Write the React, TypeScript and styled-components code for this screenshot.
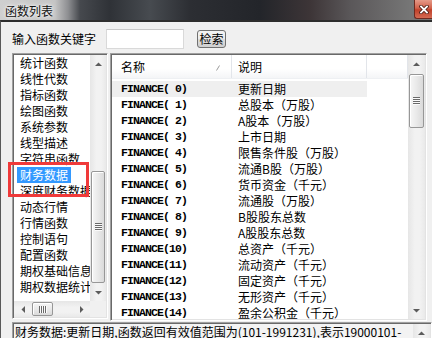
import styled, { createGlobalStyle } from 'styled-components';

const GlobalStyle = createGlobalStyle`
  html, body {
    margin: 0;
    padding: 0;
    background: #f0f0f0;
  }
  body {
    font-family: "Noto Sans CJK SC", "Noto Sans CJK JP", sans-serif;
    font-size: 12px;
  }
`;

const categories = [
  '统计函数',
  '线性代数',
  '指标函数',
  '绘图函数',
  '系统参数',
  '线型描述',
  '字符串函数',
  '财务数据',
  '深度财务数据',
  '动态行情',
  '行情函数',
  '控制语句',
  '配置函数',
  '期权基础信息',
  '期权数据统计',
];

const descriptions = [
  '更新日期',
  '总股本（万股）',
  'A股本（万股）',
  '上市日期',
  '限售条件股（万股）',
  '流通B股（万股）',
  '货币资金（千元）',
  '流通股（万股）',
  'B股股东总数',
  'A股股东总数',
  '总资产（千元）',
  '流动资产（千元）',
  '固定资产（千元）',
  '无形资产（千元）',
  '盈余公积金（千元）',
];

const Window = styled.div`
  width: 432px;
  height: 338px;
  overflow: hidden;
  display: flex;
  flex-direction: column;
  font-family: "Noto Sans CJK SC", "Noto Sans CJK JP", sans-serif;
  font-size: 12px;
  color: #000;
`;

const TitleBar = styled.div`
  height: 20px;
  flex: none;
  display: flex;
  align-items: flex-start;
  justify-content: space-between;
  background: linear-gradient(
    90deg,
    #cfcfcf 0,
    #c4c4c4 55px,
    #8e8f92 68px,
    #46494e 80px,
    #2f3237 110px,
    #474b50 150px,
    #2c2e33 190px,
    #23252a 260px,
    #3d3537 310px,
    #5a5759 350px,
    #767676 410px
  );
`;

const Title = styled.span`
  margin: 3px 0 0 5px;
  line-height: 16px;
  font-size: 12px;
  color: #111;
  text-shadow: 0 0 6px #fff, 0 0 3px #fff;
`;

const CloseButton = styled.div`
  width: 18px;
  height: 19px;
  box-sizing: border-box;
  border: 1px solid #6e2a20;
  border-right: none;
  border-top: none;
  border-radius: 0 0 0 3px;
  background: linear-gradient(180deg, #e59a88 0, #d2624b 45%, #c0412a 55%, #d46a52 100%);
  display: flex;
  align-items: center;
  justify-content: center;
`;

const Body = styled.div`
  flex: 1;
  min-height: 0;
  display: flex;
  flex-direction: column;
  background: #f0f0f0;
  border-top: 2px solid #2e2e2e;
  border-left: 1px solid #5a5a5a;
  padding: 6px 0 0 11px;
`;

const SearchRow = styled.div`
  height: 21px;
  flex: none;
  display: flex;
  align-items: center;
`;

const Label = styled.span`
  line-height: 21px;
  margin-right: 10px;
`;

const SearchInput = styled.div`
  width: 78px;
  height: 20px;
  box-sizing: border-box;
  background: #fff;
  border: 1px solid #d9d9d9;
  border-top-color: #c8c8c8;
`;

const SearchButton = styled.div`
  margin-left: 13px;
  width: 29px;
  height: 18px;
  box-sizing: border-box;
  border: 1px solid #707070;
  border-radius: 3px;
  background: linear-gradient(180deg, #f4f4f4 0, #ebebeb 50%, #dddddd 50%, #d0d0d0 100%);
  line-height: 16px;
  text-align: center;
`;

const Main = styled.div`
  margin-top: 4px;
  height: 268px;
  flex: none;
  display: flex;
  align-items: flex-start;
  gap: 2px;
`;

const Sunken = styled.div`
  box-sizing: border-box;
  border: 1px solid;
  border-color: #a0a0a0 #ffffff #ffffff #a0a0a0;
  box-shadow: inset 1px 1px 0 #696969, inset -1px -1px 0 #e3e3e3;
  padding: 1px;
`;

const CategoryPanel = styled(Sunken)`
  position: relative;
  width: 96px;
  height: 266px;
  display: flex;
  flex-direction: column;
`;

const CategoryTop = styled.div`
  flex: 1;
  min-height: 0;
  display: flex;
`;

const CategoryItems = styled.div`
  flex: 1;
  min-width: 0;
  background: #fff;
  overflow: hidden;
  padding-left: 3px;
`;

const CategoryRow = styled.div`
  height: 16px;
  line-height: 16px;
  white-space: nowrap;
`;

const CategoryLabel = styled.span<{ $selected?: boolean }>`
  display: inline-block;
  padding: 0 3px;
  background: ${({ $selected }) => ($selected ? '#3399ff' : 'transparent')};
  color: ${({ $selected }) => ($selected ? '#fff' : '#000')};
`;

const Marker = styled.div`
  position: absolute;
  left: -5px;
  top: 108px;
  width: 81px;
  height: 35px;
  box-sizing: border-box;
  border: 3px solid #f03a3a;
  pointer-events: none;
`;

const HBarRow = styled.div`
  height: 16px;
  flex: none;
  display: flex;
`;

const ScrollBar = styled.div<{ $horizontal?: boolean; $size?: number }>`
  flex: none;
  display: flex;
  flex-direction: ${({ $horizontal }) => ($horizontal ? 'row' : 'column')};
  ${({ $horizontal, $size = 17 }) => ($horizontal ? `height: ${$size}px; flex: 1;` : `width: ${$size}px;`)}
  background: ${({ $horizontal }) =>
    $horizontal
      ? 'linear-gradient(180deg, #e6e6e6, #f2f2f2 40%, #f2f2f2 70%, #e9e9e9)'
      : 'linear-gradient(90deg, #e6e6e6, #f2f2f2 40%, #f2f2f2 70%, #e9e9e9)'};
`;

const ArrowBox = styled.div<{ $horizontal?: boolean }>`
  flex: none;
  ${({ $horizontal }) => ($horizontal ? 'width: 17px;' : 'height: 17px;')}
  display: flex;
  align-items: center;
  justify-content: center;
`;

const Track = styled.div<{ $horizontal?: boolean; $end?: boolean }>`
  flex: 1;
  display: flex;
  flex-direction: ${({ $horizontal }) => ($horizontal ? 'row' : 'column')};
  justify-content: ${({ $end }) => ($end ? 'flex-end' : 'flex-start')};
  padding: 1px;
`;

const Thumb = styled.div<{ $horizontal?: boolean }>`
  flex: none;
  box-sizing: border-box;
  border: 1px solid #979797;
  border-radius: 2px;
  background: ${({ $horizontal }) =>
    $horizontal
      ? 'linear-gradient(180deg, #f6f6f6, #e9e9e9 50%, #dadada)'
      : 'linear-gradient(90deg, #f6f6f6, #e9e9e9 50%, #dadada)'};
  box-shadow: inset 1px 1px 0 #fff;
  display: flex;
  align-items: center;
  justify-content: center;
`;

const Grip = styled.div<{ $horizontal?: boolean }>`
  width: ${({ $horizontal }) => ($horizontal ? 8 : 7)}px;
  height: ${({ $horizontal }) => ($horizontal ? 7 : 8)}px;
  background: repeating-linear-gradient(
    ${({ $horizontal }) => ($horizontal ? '90deg' : '180deg')},
    #6a6a6a 0 1px,
    #fbfbfb 1px 2px
  );
`;

const Corner = styled.div`
  width: 16px;
  flex: none;
  background: #f0f0f0;
`;

const FuncPanel = styled(Sunken)`
  width: 317px;
  height: 268px;
  display: flex;
`;

const FuncList = styled.div`
  flex: 1;
  min-width: 0;
  background: #fff;
  overflow: hidden;
  display: flex;
  flex-direction: column;
`;

const Header = styled.div`
  height: 24px;
  flex: none;
  display: flex;
  background: linear-gradient(180deg, #ffffff 0, #ffffff 60%, #f4f5f7 100%);
  border-bottom: 1px solid #eef0f3;
  box-sizing: border-box;
`;

const HeaderCell = styled.div<{ $width?: number; $pad: number }>`
  ${({ $width }) => ($width ? `width: ${$width}px; flex: none;` : 'flex: 1;')}
  box-sizing: border-box;
  padding-left: ${({ $pad }) => $pad}px;
  line-height: 23px;
  border-right: 1px solid #e2e5ea;
  position: relative;
  display: flex;
  align-items: center;
`;

const SortMark = styled.svg`
  position: absolute;
  right: 11px;
  top: 10px;
`;

const Rows = styled.div`
  padding-top: 2px;
`;

const FuncRow = styled.div<{ $selected?: boolean }>`
  display: grid;
  grid-template-columns: 120px 135px;
  width: 255px;
  height: 16px;
  line-height: 16px;
  background: ${({ $selected }) => ($selected ? '#efefef' : 'transparent')};
`;

const FuncName = styled.span`
  padding-left: 9px;
  font-family: "Liberation Mono", "DejaVu Sans Mono", monospace;
  font-weight: bold;
  font-size: 11.5px;
  letter-spacing: -0.9px;
  white-space: pre;
`;

const FuncDesc = styled.span`
  padding-left: 6px;
  white-space: nowrap;
  overflow: hidden;
`;

const StatusBox = styled(Sunken)`
  margin-top: 1px;
  flex: 1;
  display: flex;
  background: #f3f3f3;
`;

const StatusText = styled.div`
  flex: 1;
  min-width: 0;
  padding-left: 1px;
  line-height: 16px;
  white-space: nowrap;
  overflow: hidden;
`;

type Dir = 'up' | 'down' | 'left' | 'right';

const arrowPoints: Record<Dir, string> = {
  up: '0,4 3.5,0.5 7,4',
  down: '0,0 3.5,3.5 7,0',
  left: '4,0 0.5,3.5 4,7',
  right: '0,0 3.5,3.5 0,7',
};

const Arrow = ({ dir }: { dir: Dir }) => {
  const vertical = dir === 'up' || dir === 'down';
  return (
    <svg width={vertical ? 7 : 4} height={vertical ? 4 : 7} viewBox={vertical ? '0 0 7 4' : '0 0 4 7'}>
      <polygon points={arrowPoints[dir]} fill="#5c5c5c" />
    </svg>
  );
};

const CloseGlyph = () => (
  <svg width="10" height="9" viewBox="0 0 10 9">
    <path d="M2 1.5 L8 7.5 M8 1.5 L2 7.5" stroke="#4a1b12" strokeWidth="3.4" strokeLinecap="square" />
    <path d="M2 1.5 L8 7.5 M8 1.5 L2 7.5" stroke="#ffffff" strokeWidth="1.8" strokeLinecap="square" />
  </svg>
);

export default function App() {
  return (
    <>
      <GlobalStyle />
      <Window>
        <TitleBar>
          <Title>函数列表</Title>
          <CloseButton>
            <CloseGlyph />
          </CloseButton>
        </TitleBar>
        <Body>
          <SearchRow>
            <Label>输入函数关键字</Label>
            <SearchInput />
            <SearchButton>检索</SearchButton>
          </SearchRow>
          <Main>
            <CategoryPanel>
              <CategoryTop>
                <CategoryItems>
                  {categories.map((c) => (
                    <CategoryRow key={c}>
                      <CategoryLabel $selected={c === '财务数据'}>{c}</CategoryLabel>
                    </CategoryRow>
                  ))}
                </CategoryItems>
                <ScrollBar $size={16}>
                  <ArrowBox>
                    <Arrow dir="up" />
                  </ArrowBox>
                  <Track $end>
                    <Thumb style={{ height: 112 }}>
                      <Grip />
                    </Thumb>
                  </Track>
                  <ArrowBox>
                    <Arrow dir="down" />
                  </ArrowBox>
                </ScrollBar>
              </CategoryTop>
              <HBarRow>
                <ScrollBar $horizontal $size={16}>
                  <ArrowBox $horizontal>
                    <Arrow dir="left" />
                  </ArrowBox>
                  <Track $horizontal>
                    <Thumb $horizontal style={{ width: 21 }}>
                      <Grip $horizontal />
                    </Thumb>
                  </Track>
                  <ArrowBox $horizontal>
                    <Arrow dir="right" />
                  </ArrowBox>
                </ScrollBar>
                <Corner />
              </HBarRow>
              <Marker />
            </CategoryPanel>
            <FuncPanel>
              <FuncList>
                <Header>
                  <HeaderCell $width={120} $pad={9}>
                    名称
                    <SortMark width="4" height="6" viewBox="0 0 4 6">
                      <path d="M0.5 5.5 L3.5 0.5" stroke="#9a9a9a" strokeWidth="1" />
                    </SortMark>
                  </HeaderCell>
                  <HeaderCell $width={135} $pad={6}>
                    说明
                  </HeaderCell>
                  <HeaderCell $pad={0} />
                </Header>
                <Rows>
                  {descriptions.map((d, i) => (
                    <FuncRow key={i} $selected={i === 0}>
                      <FuncName>{`FINANCE(${i < 10 ? ' ' + i : i})`}</FuncName>
                      <FuncDesc>{d}</FuncDesc>
                    </FuncRow>
                  ))}
                </Rows>
              </FuncList>
              <ScrollBar>
                <ArrowBox>
                  <Arrow dir="up" />
                </ArrowBox>
                <Track>
                  <Thumb style={{ height: 54, marginTop: 1 }}>
                    <Grip />
                  </Thumb>
                </Track>
                <ArrowBox>
                  <Arrow dir="down" />
                </ArrowBox>
              </ScrollBar>
            </FuncPanel>
          </Main>
          <StatusBox>
            <StatusText>财务数据:更新日期,函数返回有效值范围为(101-1991231),表示19000101-</StatusText>
            <ScrollBar>
              <ArrowBox>
                <Arrow dir="up" />
              </ArrowBox>
            </ScrollBar>
          </StatusBox>
        </Body>
      </Window>
    </>
  );
}
